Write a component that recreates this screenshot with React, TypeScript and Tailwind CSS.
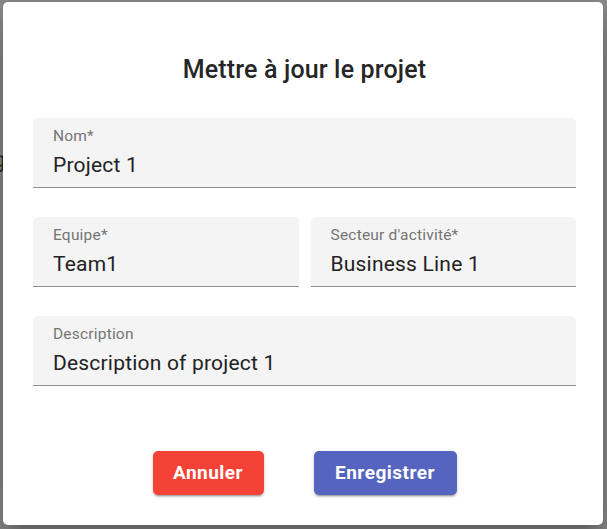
import React from "react";

function Field({ label, value }: { label: string; value: string }) {
  return (
    <div className="h-[70px] bg-[#f4f4f4] rounded-t-[5px] border-b border-[#8f8f8f] pl-[20px] pr-3 flex flex-col">
      <div className="mt-[11px] text-[15.5px] leading-[15px] text-[#757575] tracking-[0.2px]">{label}</div>
      <div className="mt-[9px] text-[21px] leading-[24px] text-[#222] tracking-[0.2px]">{value}</div>
    </div>
  );
}

export default function App() {
  return (
    <div
      className="w-[607px] h-[529px] bg-[#8c8c8c] relative overflow-hidden pt-[2px] pl-[3px]"
      style={{ fontFamily: "Roboto, 'Liberation Sans', sans-serif" }}
    >
      <span className="absolute left-[-7px] top-[148px] text-[22px] leading-[24px] text-[#2a2a2a]">g</span>
      <div className="relative w-[600px] h-[523px] bg-white rounded-[5px] shadow-[0_11px_15px_-7px_rgba(0,0,0,0.2),0_24px_38px_3px_rgba(0,0,0,0.14),0_9px_46px_8px_rgba(0,0,0,0.12)] pt-[52px] pl-[30px] pr-[27px] flex flex-col">
        <h2 className="h-[32px] leading-[32px] text-[25px] font-medium text-[#262626] text-center tracking-[0.15px]">
          Mettre à jour le projet
        </h2>
        <div className="mt-[32px] flex flex-col gap-[29px]">
          <Field label="Nom*" value="Project 1" />
          <div className="grid grid-cols-2 gap-[12px]">
            <Field label="Equipe*" value="Team1" />
            <Field label="Secteur d'activité*" value="Business Line 1" />
          </div>
          <Field label="Description" value="Description of project 1" />
        </div>
        <div className="mt-[65px] flex justify-center gap-[50px]">
          <button className="w-[111px] h-[44px] rounded-[5px] bg-[#f44336] text-white text-[19px] font-bold tracking-[0.5px] shadow-[0_3px_1px_-2px_rgba(0,0,0,0.2),0_2px_2px_0_rgba(0,0,0,0.14),0_1px_5px_0_rgba(0,0,0,0.12)]">
            Annuler
          </button>
          <button className="w-[143px] h-[44px] rounded-[5px] bg-[#5565bf] text-white text-[19px] font-bold tracking-[0.5px] shadow-[0_3px_1px_-2px_rgba(0,0,0,0.2),0_2px_2px_0_rgba(0,0,0,0.14),0_1px_5px_0_rgba(0,0,0,0.12)]">
            Enregistrer
          </button>
        </div>
      </div>
    </div>
  );
}
